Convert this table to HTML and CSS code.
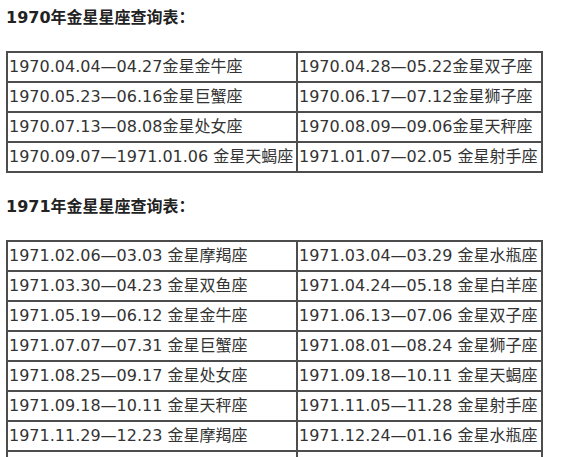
FILE: index.html
```html
<!DOCTYPE html>
<html lang="zh-CN">
<head>
<meta charset="utf-8">
<title>金星星座查询表</title>
<link rel="stylesheet" href="styles.css">
</head>
<body>
<div class="page">
  <h2 class="title">1970年金星星座查询表：</h2>
  <table class="venus">
    <tr><td class="c1">1970.04.04—04.27金星金牛座</td><td class="c2">1970.04.28—05.22金星双子座</td></tr>
    <tr><td class="c1">1970.05.23—06.16金星巨蟹座</td><td class="c2">1970.06.17—07.12金星狮子座</td></tr>
    <tr><td class="c1">1970.07.13—08.08金星处女座</td><td class="c2">1970.08.09—09.06金星天秤座</td></tr>
    <tr><td class="c1">1970.09.07—1971.01.06 金星天蝎座</td><td class="c2">1971.01.07—02.05 金星射手座</td></tr>
  </table>
  <h2 class="title second">1971年金星星座查询表：</h2>
  <table class="venus">
    <tr><td class="c1">1971.02.06—03.03 金星摩羯座</td><td class="c2">1971.03.04—03.29 金星水瓶座</td></tr>
    <tr><td class="c1">1971.03.30—04.23 金星双鱼座</td><td class="c2">1971.04.24—05.18 金星白羊座</td></tr>
    <tr><td class="c1">1971.05.19—06.12 金星金牛座</td><td class="c2">1971.06.13—07.06 金星双子座</td></tr>
    <tr><td class="c1">1971.07.07—07.31 金星巨蟹座</td><td class="c2">1971.08.01—08.24 金星狮子座</td></tr>
    <tr><td class="c1">1971.08.25—09.17 金星处女座</td><td class="c2">1971.09.18—10.11 金星天蝎座</td></tr>
    <tr><td class="c1">1971.09.18—10.11 金星天秤座</td><td class="c2">1971.11.05—11.28 金星射手座</td></tr>
    <tr><td class="c1">1971.11.29—12.23 金星摩羯座</td><td class="c2">1971.12.24—01.16 金星水瓶座</td></tr>
    <tr><td class="c1">1972.01.17—1972.02.10 金星双鱼座</td><td class="c2">1972.02.11—03.06 金星白羊座</td></tr>
  </table>
</div>
</body>
</html>
```
FILE: styles.css
```css
html, body {
  margin: 0;
  padding: 0;
  background: #ffffff;
}
.page {
  padding: 6px 0 0 6px;
  font-family: "DejaVu Sans", "Noto Sans CJK SC", sans-serif;
  color: #333333;
}
.title {
  margin: 0;
  font-size: 16px;
  line-height: 24px;
  font-weight: bold;
  color: #222222;
}
.title.second {
  margin-top: 22px;
}
.venus {
  border-collapse: collapse;
  margin-top: 21px;
  width: 535px;
  table-layout: fixed;
}
.venus td {
  border: 2px solid #4d4d4d;
  height: 28px;
  padding: 0 0 0 1px;
  font-size: 16px;
  line-height: 28px;
  white-space: nowrap;
  overflow: hidden;
  box-sizing: border-box;
}
.venus .c1 { width: 290px; }
.venus .c2 { width: 245px; }
```
